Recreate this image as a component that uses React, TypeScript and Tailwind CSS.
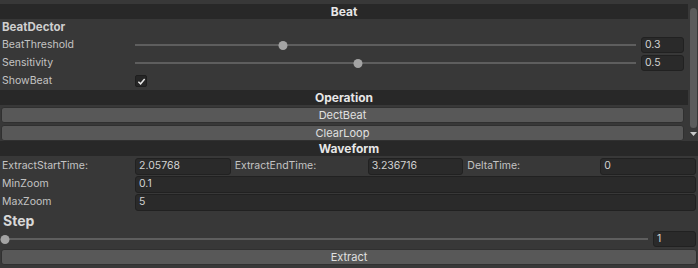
import React from "react";

function Header({ title }: { title: string }) {
  return (
    <div className="h-[15px] bg-[#282828] flex items-center justify-center font-bold text-[12px] text-[#e6e6e6] leading-none">
      {title}
    </div>
  );
}

function Field({ value, className = "" }: { value: string; className?: string }) {
  return (
    <div
      className={`h-[16px] bg-[#2a2a2a] border border-[#212121] rounded-[3px] flex items-center pl-[3px] text-[#d2d2d2] leading-none ${className}`}
    >
      {value}
    </div>
  );
}

function Slider({ pos, value }: { pos: number; value: string }) {
  return (
    <div className="flex-1 flex items-center gap-[5px]">
      <div className="relative flex-1 h-[16px] flex items-center">
        <div className="w-full h-[2px] bg-[#5e5e5e]" />
        <div
          className="absolute w-[9px] h-[9px] rounded-full bg-[#a3a3a3] -translate-x-1/2"
          style={{ left: `${pos * 100}%` }}
        />
      </div>
      <Field value={value} className="w-[43px]" />
    </div>
  );
}

function Button({ label }: { label: string }) {
  return (
    <div className="h-[16px] mx-[1px] bg-[#585858] border border-[#303030] rounded-[3px] flex items-center justify-center text-[11px] text-[#e0e0e0] leading-none">
      {label}
    </div>
  );
}

export default function App() {
  return (
    <div className="w-[698px] h-[268px] bg-[#383838] font-['Inter',sans-serif] text-[10.5px] text-[#c4c4c4] overflow-hidden">
      {/* Beat + Operation with scrollbar */}
      <div className="flex h-[141px]">
        <div className="flex-1 flex flex-col pt-[4px]">
          <Header title="Beat" />
          <div className="h-[16px] mt-[1px] flex items-center px-[2px] font-bold text-[11.5px] text-[#cfcfcf] leading-none">
            BeatDector
          </div>
          <div className="h-[16px] mt-[1px] flex items-center pl-[2px] pr-[4px]">
            <span className="w-[133px] leading-none">BeatThreshold</span>
            <Slider pos={0.295} value="0.3" />
          </div>
          <div className="h-[16px] mt-[2px] flex items-center pl-[2px] pr-[4px]">
            <span className="w-[133px] leading-none">Sensitivity</span>
            <Slider pos={0.445} value="0.5" />
          </div>
          <div className="h-[16px] mt-[2px] flex items-center pl-[2px]">
            <span className="w-[133px] leading-none">ShowBeat</span>
            <div className="w-[12px] h-[12px] bg-[#262626] border border-[#1e1e1e] rounded-[2px] flex items-center justify-center">
              <svg width="9" height="9" viewBox="0 0 10 10">
                <path d="M1.5 5.2 L4 7.6 L8.5 2.3" fill="none" stroke="#e8e8e8" strokeWidth="1.6" />
              </svg>
            </div>
          </div>
          <div className="mt-[1px]">
            <Header title="Operation" />
          </div>
          <div className="mt-[2px] pr-[3px]">
            <Button label="DectBeat" />
          </div>
          <div className="mt-[2px] pr-[3px]">
            <Button label="ClearLoop" />
          </div>
        </div>
        {/* scrollbar */}
        <div className="w-[10px] pt-[8px] pb-[4px] flex flex-col items-center">
          <div className="w-[7px] flex-1 bg-[#5c5c5c] rounded-full" />
          <svg width="7" height="5" viewBox="0 0 7 5" className="mt-[4px]">
            <path d="M0 0 L7 0 L3.5 4 Z" fill="#c8c8c8" />
          </svg>
        </div>
      </div>

      {/* Waveform */}
      <Header title="Waveform" />
      <div className="grid grid-cols-3 gap-x-[4px] px-[2px] mt-[2px]">
        <div className="flex items-center">
          <span className="w-[133px] leading-none">ExtractStartTime:</span>
          <Field value="2.05768" className="flex-1 h-[17px]" />
        </div>
        <div className="flex items-center">
          <span className="w-[133px] leading-none">ExtractEndTime:</span>
          <Field value="3.236716" className="flex-1 h-[17px]" />
        </div>
        <div className="flex items-center">
          <span className="w-[133px] leading-none">DeltaTime:</span>
          <Field value="0" className="flex-1 h-[17px]" />
        </div>
      </div>
      <div className="flex items-center px-[2px] mt-[1px]">
        <span className="w-[133px] leading-none">MinZoom</span>
        <Field value="0.1" className="flex-1 h-[17px]" />
      </div>
      <div className="flex items-center px-[2px] mt-[1px]">
        <span className="w-[133px] leading-none">MaxZoom</span>
        <Field value="5" className="flex-1 h-[17px]" />
      </div>
      <div className="h-[19px] flex items-center px-[3px] font-bold text-[14px] text-[#d8d8d8] leading-none">
        Step
      </div>
      <div className="h-[16px] flex items-center pl-[2px] pr-[2px] mt-[1px]">
        <Slider pos={0.005} value="1" />
      </div>
      <div className="mt-[2px]">
        <Button label="Extract" />
      </div>
    </div>
  );
}
